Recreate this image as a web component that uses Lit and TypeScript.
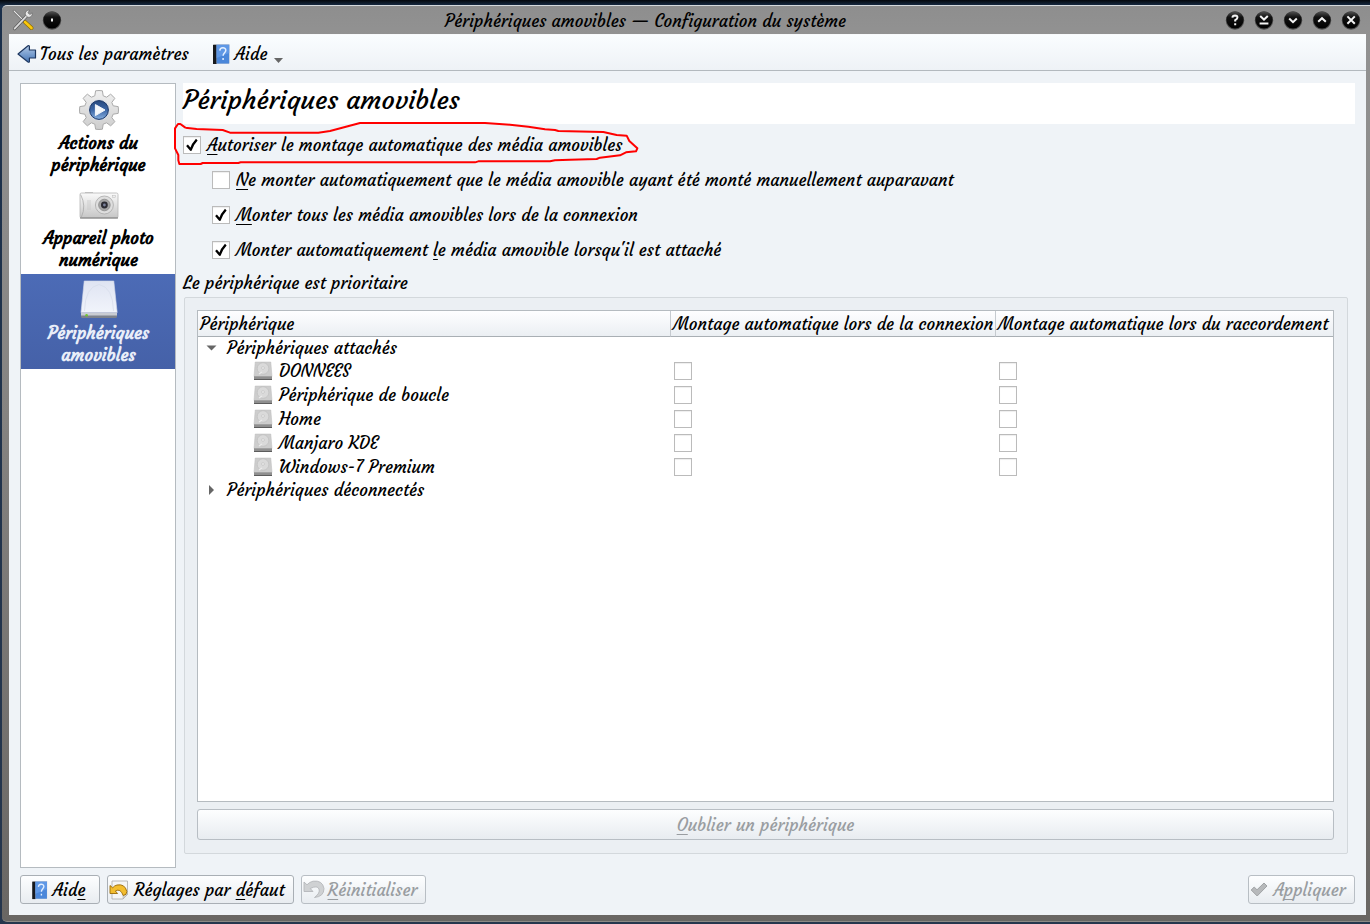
import { LitElement, html, css, svg, nothing, TemplateResult } from "lit";
import { customElement, state } from "lit/decorators.js";
import { classMap } from "lit/directives/class-map.js";

const toolsIcon = html`<svg width="22" height="22" viewBox="0 0 22 22" aria-hidden="true">
  <path d="M2 2l9 9" stroke="#555" stroke-width="2.4" stroke-linecap="round" />
  <path d="M2 2l9 9" stroke="#e6e6e6" stroke-width="1.2" stroke-linecap="round" />
  <path d="M13 13l6.500 6" stroke="#8a6a00" stroke-width="3.800" stroke-linecap="round" />
  <path d="M13 13l6.500 6" stroke="#fbc80c" stroke-width="2.600" stroke-linecap="round" />
  <path d="M2.600 19.600L15 6.600" stroke="#555" stroke-width="3" stroke-linecap="round" />
  <path d="M2.600 19.600L15 6.600" stroke="#ddd" stroke-width="1.800" stroke-linecap="round" />
  <path d="M17.600 1.200c-2.600-.4-5 1.800-4.200 4.800l2.400 2.200c2.800.6 4.800-1.600 4.400-4.400l-2.400 1.800-1.800-1.800z" fill="#e9e9e9" stroke="#666" stroke-width=".7" />
</svg>`;

const backIcon = html`<svg width="20" height="20" viewBox="0 0 20 20" aria-hidden="true">
  <defs><linearGradient id="g" x1="0" y1="0" x2="0" y2="1"><stop offset="0" stop-color="#b3c8e4" /><stop offset=".5" stop-color="#7ba0d0" /><stop offset="1" stop-color="#4675b4" /></linearGradient></defs>
  <path d="M1 10L11 1.800Q12.400 1.200 12.400 2.600V6H18.500V14H12.400V17.600Q12.200 18.600 11 18Z" fill="url(#g)" stroke="#1d3760" stroke-width="1.200" stroke-linejoin="round" />
</svg>`;

const bookIcon = (w: number, h: number) => html`<svg width=${w} height=${h} viewBox="0 0 18 22" aria-hidden="true">
  <path d="M2.500 1L1 2.200V21h15.600l.9-1V1z" fill="#d5d5d5" />
  <path d="M1 1.800h3.600V21H1z" fill="#17191d" />
  <path d="M4.600 1.800h12.600V20.600H4.600z" fill="#4a87da" />
  <path d="M4.600 1.800h12.600V10L4.600 15z" fill="#5f98e6" />
  <path d="M7.800 7.600c.2-3.800 6-3.800 6-.4 0 2.400-2.700 2.600-2.700 5.600M11.100 15v2" stroke="#e3efff" stroke-width="1.500" fill="none" />
</svg>`;

const gearIcon = html`<svg width="40" height="40" viewBox="0 0 40 40" aria-hidden="true">
  <defs>
    <linearGradient id="m" x1="0" y1="0" x2="0" y2="1"><stop offset="0" stop-color="#f0f0f0" /><stop offset="1" stop-color="#cdcdcd" /></linearGradient>
    <linearGradient id="b" x1="0" y1="0" x2="0" y2="1"><stop offset="0" stop-color="#27497f" /><stop offset=".5" stop-color="#3c66a6" /><stop offset="1" stop-color="#88b0e0" /></linearGradient>
  </defs>
  <path
    d="M16.600 .8Q20 .2 23.400 .8L24.200 5.800L27.600 7.200L31.600 4.200Q34 6 35.800 8.400L32.800 12.400L34.200 15.800L39.200 16.600Q39.800 20 39.200 23.400L34.200 24.200L32.800 27.600L35.800 31.600Q34 34 31.600 35.800L27.600 32.800L24.200 34.200L23.400 39.200Q20 39.800 16.600 39.200L15.800 34.200L12.400 32.800L8.400 35.800Q6 34 4.200 31.600L7.200 27.600L5.800 24.200L.8 23.400Q.2 20 .8 16.600L5.800 15.800L7.200 12.400L4.200 8.400Q6 6 8.400 4.200L12.400 7.200L15.800 5.800Z"
    fill="url(#m)" stroke="#aaa" stroke-width="1" stroke-linejoin="round" />
  <circle cx="20" cy="20" r="10.600" fill="#d7dde8" />
  <circle cx="20" cy="20" r="9.400" fill="url(#b)" stroke="#1d3766" stroke-width="1" />
  <path d="M16.400 14.600L26 20l-9.600 5.600z" fill="#f4f7fb" stroke="#f4f7fb" stroke-linejoin="round" />
</svg>`;

const cameraIcon = html`<svg width="40" height="40" viewBox="0 0 40 40" aria-hidden="true">
  <defs><linearGradient id="c" x1="0" y1="0" x2="0" y2="1"><stop offset="0" stop-color="#fafafa" /><stop offset="1" stop-color="#c6c6c6" /></linearGradient></defs>
  <path d="M6 7h8v2H6z" fill="#c5c5c5" />
  <rect x="1" y="8" width="38" height="25" rx="1.500" fill="url(#c)" stroke="#b5b5b5" stroke-width=".8" />
  <path d="M1.600 9.500Q7.500 21 2.400 32" fill="none" stroke="#aaa" stroke-width=".8" />
  <path d="M1 33h38" stroke="#7b7b7b" stroke-width="1.200" />
  <path d="M9 15v10M11 15v10" stroke="#c8c8c8" stroke-width=".8" />
  <circle cx="25.400" cy="20" r="9" fill="#dedede" stroke="#a9a9a9" stroke-width=".8" />
  <circle cx="25.400" cy="20" r="5.800" fill="#a4a4a4" stroke="#8a8a8a" stroke-width=".8" />
  <circle cx="25.400" cy="20" r="3.400" fill="#2b2b33" />
  <circle cx="25.400" cy="20" r="1.400" fill="#79809a" />
  <rect x="33.500" y="10.500" width="3" height="2" fill="#eee" stroke="#bbb" stroke-width=".5" />
</svg>`;

const driveIcon = html`<svg width="40" height="40" viewBox="0 0 40 40" aria-hidden="true">
  <defs><linearGradient id="d" x1="0" y1="0" x2="0" y2="1"><stop offset="0" stop-color="#dfe4f2" /><stop offset="1" stop-color="#f1f4fb" /></linearGradient></defs>
  <path d="M2 33h36v3.400Q38 38 36.400 38H3.600Q2 38 2 36.400z" fill="#7d828c" />
  <path d="M5.200 1H34.800L38.200 32.600H2z" fill="url(#d)" stroke="#d3d9e8" stroke-width=".6" />
  <path d="M2 32.600H38V35.400H2z" fill="#c9ccd3" />
  <path d="M5.500 31Q6 7 20 4.500Q34 7 34.500 31" fill="none" stroke="#d5dbe9" stroke-width=".7" />
  <circle cx="7.600" cy="35.200" r="1.300" fill="#6fc52e" />
</svg>`;

const diskIcon = html`<svg width="20" height="20" viewBox="0 0 20 20" aria-hidden="true">
  <path d="M2.200 1H17.800L19 15.500H1z" fill="#cdcdcd" stroke="#bdbdbd" stroke-width=".5" />
  <circle cx="10" cy="7.500" r="5.800" fill="#dadada" stroke="#bcbcbc" stroke-width=".6" />
  <circle cx="10" cy="7" r="1.400" fill="#ececec" stroke="#b5b5b5" stroke-width=".5" />
  <path d="M6 13l3-2" stroke="#ececec" stroke-width="1.200" />
  <path d="M1 15.300H19V18H1z" fill="#8f8f8f" />
  <path d="M1 18H19V19H1z" fill="#5c5c5c" />
</svg>`;

const undoPageIcon = html`<svg width="20" height="20" viewBox="0 0 20 20" aria-hidden="true">
  <path d="M3 1H18.500V14.500L14 19H3z" fill="#f5f5f5" stroke="#aaa" stroke-width=".8" />
  <path d="M18.500 14.500H14V19z" fill="#d2d2d2" stroke="#aaa" stroke-width=".5" />
  <path d="M1 5.500V13.500H8.600L6.300 11Q11.500 8 14.200 15.500Q18 15 17.800 11.500Q16 3.500 8 5Q5.500 5.500 3.700 7.800z" fill="#f3bd2e" stroke="#9b6b08" stroke-width=".9" stroke-linejoin="round" />
</svg>`;

const undoIcon = html`<svg width="22" height="22" viewBox="0 0 22 22" aria-hidden="true">
  <path d="M1 3V12.500H10L7.200 9.500Q14.500 6 16 10Q17.500 14 11.500 18.500Q21 17.500 21 9.500Q19.500 1 10 2.200Q6.500 3 4 5.800z" fill="#cfd1d3" stroke="#b4b7ba" stroke-width=".9" stroke-linejoin="round" />
</svg>`;

const applyIcon = html`<svg width="18" height="18" viewBox="0 0 18 18" aria-hidden="true">
  <path d="M1.200 9L4.200 6L7 8.800L14 2L17 5L7.200 15z" fill="#b7b9bb" stroke="#a0a3a5" stroke-width="1" stroke-linejoin="round" />
</svg>`;

const orb = (glyph: TemplateResult) => html`<svg width="20" height="20" viewBox="0 0 20 20" aria-hidden="true">
  <defs><linearGradient id="o" x1="0" y1="0" x2="0" y2="1"><stop offset="0" stop-color="#555" /><stop offset=".35" stop-color="#111" /><stop offset="1" stop-color="#000" /></linearGradient></defs>
  <circle cx="10" cy="10.500" r="9.200" fill="#4c4c4c" />
  <circle cx="10" cy="9.800" r="8.600" fill="url(#o)" />
  <g fill="none" stroke="#f4f4f4" stroke-width="2">${glyph}</g>
</svg>`;

const windowButtons = [
  { label: "Aide contextuelle", glyph: svg`<path d="M7.400 7.600Q7.600 5.400 10 5.400Q12.600 5.600 12.400 7.600Q12.200 9 10.200 10.200V11.600M10.200 13.200v2" />` },
  { label: "Garder dessous", glyph: svg`<path d="M6.200 6L10 9.600L13.800 6M5.600 13.400H14.400" />` },
  { label: "Réduire", glyph: svg`<path d="M6.200 8.600L10 12.200L13.800 8.600" />` },
  { label: "Agrandir", glyph: svg`<path d="M6.200 11.800L10 8.200L13.800 11.800" />` },
  { label: "Fermer", glyph: svg`<path d="M6.400 6.400L13.800 13.800M13.800 6.400L6.400 13.800" />` },
];

const modules = [
  { lines: ["Actions du", "périphérique"], icon: gearIcon },
  { lines: ["Appareil photo", "numérique"], icon: cameraIcon },
  { lines: ["Périphériques", "amovibles"], icon: driveIcon },
];

const options = [
  { before: "", key: "A", after: "utoriser le montage automatique des média amovibles", on: true },
  { before: "", key: "N", after: "e monter automatiquement que le média amovible ayant été monté manuellement auparavant", on: false },
  { before: "", key: "M", after: "onter tous les média amovibles lors de la connexion", on: true },
  { before: "Monter automatiquement ", key: "l", after: "e média amovible lorsqu'il est attaché", on: true },
];

const devices = ["DONNEES", "Périphérique de boucle", "Home", "Manjaro KDE", "Windows-7 Premium"];

@customElement("app-root")
export class AppRoot extends LitElement {
  @state() private selected = 2;

  static styles = css`
    :host {
      display: block;
      font: 17px/22px Courgette, Lato, sans-serif;
      color: #000;
    }
    * { box-sizing: border-box; }
    svg { display: block; flex: none; }
    button { font: inherit; color: inherit; margin: 0; padding: 0; border: 0; background: none; }
    u { text-decoration-thickness: 1px; text-underline-offset: 3px; text-decoration-skip-ink: none; }
    .desktop {
      min-height: 100vh;
      display: flex;
      padding: 5px 0 2px 2px;
      background: linear-gradient(#05080d, #1a2f4a 6px, #26364d);
    }
    .window {
      flex: 1;
      min-width: 0;
      display: flex;
      flex-direction: column;
      padding: 0 4px 6px 7px;
      border-top: 1px solid #d5d9dc;
      border-bottom: 1px solid #8d8985;
      border-radius: 5px 0 0 5px;
      background: linear-gradient(#8e8e8e, #929292 30px, #858381 45%, #696663);
    }
    .titlebar { display: flex; align-items: center; height: 28px; padding: 0 5px 0 3px; }
    .title { flex: 1; text-align: center; padding: 2px 0 0 4px; }
    .orbs { display: flex; gap: 9px; }
    .left { gap: 8px; align-items: center; }
    .client {
      flex: 1;
      display: flex;
      flex-direction: column;
      background: #eff3f7;
      border-top: 1px solid #f8fafc;
    }
    .toolbar {
      display: flex;
      align-items: center;
      height: 36px;
      padding: 2px 8px 0;
      gap: 23px;
      background: linear-gradient(#fafdff, #eef2f6);
      border-bottom: 1px solid #b3b9be;
    }
    .tool { display: flex; align-items: center; gap: 3px; }
    .help { gap: 5px; }
    .caret { margin: 14px 0 0 2px; }
    .content { flex: 1; display: flex; gap: 7px; padding: 12px 11px 7px; }
    .sidebar { width: 156px; flex: none; background: #fff; border: 1px solid #b5bbc0; }
    .module {
      display: flex;
      flex-direction: column;
      align-items: center;
      gap: 2px;
      width: 100%;
      padding: 6px 0 3px 1px;
      font-weight: 700;
    }
    .module.selected { color: #e9eef9; background: linear-gradient(#4c6bb6, #4561a8); }
    .module span { display: block; }
    .panel { flex: 1; min-width: 0; display: flex; flex-direction: column; }
    h1 { margin: 0 0 10px; height: 41px; font-size: 26px; line-height: 34px; font-weight: 400; background: #fff; }
    .options { display: flex; flex-direction: column; align-items: flex-start; gap: 13px; }
    .option { display: flex; align-items: center; gap: 6px; position: relative; }
    .child { margin-left: 29px; }
    .check { display: inline-grid; width: 18px; height: 18px; flex: none; }
    .check > * { grid-area: 1 / 1; }
    .check input {
      appearance: none;
      margin: 0;
      width: 18px;
      height: 18px;
      border: 1px solid #bbb;
      background: #fff;
      box-shadow: inset 0 1px 1px #eee;
    }
    .check svg { visibility: hidden; pointer-events: none; z-index: 1; }
    .check input:checked + svg { visibility: visible; }
    .scribble { position: absolute; left: -13px; top: -14px; pointer-events: none; }
    h2 { margin: 11px 0 3px; font-size: 17px; line-height: 22px; font-weight: 400; }
    .group {
      flex: 1;
      display: flex;
      flex-direction: column;
      gap: 7px;
      margin: 0 7px 14px 1px;
      padding: 12px 13px 13px 12px;
      border: 1px solid #d3d8dc;
      border-radius: 2px;
      background: #ebeff3;
    }
    .list { flex: 1; background: #fff; border: 1px solid #b5bbc0; }
    table { width: 100%; border-collapse: separate; border-spacing: 0; table-layout: fixed; }
    th {
      height: 26px;
      padding: 0 0 0 2px;
      font-weight: 400;
      text-align: left;
      white-space: nowrap;
      background: linear-gradient(#fefeff, #ebeff3);
      border-bottom: 1px solid #a9afb4;
    }
    th + th { border-left: 1px solid #c5cacf; }
    .mount { width: 325px; }
    .plug { width: 338px; }
    td { height: 24px; padding: 0 0 0 4px; line-height: 20px; }
    td.branch { height: 22px; padding: 0; }
    .node { display: flex; align-items: center; gap: 9px; padding-left: 7px; }
    .device { display: flex; align-items: center; gap: 6px; padding-left: 51px; }
    td .check { display: grid; }
    .btn {
      display: flex;
      align-items: center;
      justify-content: center;
      gap: 5px;
      height: 29px;
      padding: 0 6px;
      border: 1px solid #a9afb5;
      border-radius: 3px;
      background: linear-gradient(#fdfeff, #e8ecf0);
      white-space: nowrap;
    }
    .btn:disabled { color: #999da1; border-color: #b8bec4; }
    .forget { height: 31px; }
    .footer { display: flex; gap: 7px; padding: 0 11px 11px; }
    .assist { min-width: 80px; padding: 0 10px 0 6px; }
    .defaults, .reset, .apply { padding: 0 8px 0 1px; }
    .defaults { min-width: 186px; }
    .reset { min-width: 124px; gap: 3px; }
    .apply { min-width: 107px; margin-left: auto; }
  `;

  private check(id: string, on: boolean, label?: string) {
    return html`<span class="check">
      <input type="checkbox" id=${id} .checked=${on} aria-label=${label ?? nothing} />
      <svg width="18" height="18" viewBox="0 0 18 18" aria-hidden="true">
        <path d="M4 9.200L7.800 13.800Q9.500 8 13.800 3.600" fill="none" stroke="#000" stroke-width="2.300" stroke-linejoin="round" />
      </svg>
    </span>`;
  }

  render() {
    return html`<div class="desktop">
      <div class="window">
        <header class="titlebar">
          <div class="orbs left">
            ${toolsIcon}
            <button aria-label="Tous les bureaux">${orb(svg`<path d="M10 8.500v3" />`)}</button>
          </div>
          <div class="title">Périphériques amovibles — Configuration du système</div>
          <div class="orbs">
            ${windowButtons.map((b) => html`<button aria-label=${b.label}>${orb(b.glyph)}</button>`)}
          </div>
        </header>
        <div class="client">
          <nav class="toolbar">
            <button class="tool">${backIcon}Tous les paramètres</button>
            <button class="tool help">
              ${bookIcon(18, 22)}Aide
              <svg class="caret" width="9" height="5" viewBox="0 0 9 5" aria-hidden="true"><path d="M0 0h9L4.500 5z" fill="#666" /></svg>
            </button>
          </nav>
          <div class="content">
            <nav class="sidebar">
              ${modules.map(
                (m, i) => html`<button
                  class=${classMap({ module: true, selected: i === this.selected })}
                  @click=${() => (this.selected = i)}
                >
                  ${m.icon}
                  <span>${m.lines.map((l) => html`<span>${l}</span>`)}</span>
                </button>`
              )}
            </nav>
            <main class="panel">
              <h1>Périphériques amovibles</h1>
              <div class="options">
                ${options.map(
                  (o, i) => html`<div class=${classMap({ option: true, child: i > 0 })}>
                    ${this.check(`option-${i}`, o.on)}
                    <label for="option-${i}">${o.before}<u>${o.key}</u>${o.after}</label>
                    ${i === 0
                      ? html`<svg class="scribble" width="480" height="50" viewBox="0 15 1440 150" aria-hidden="true">
                          <path
                            d="M46 38L31 27L24 27L15 40V100L25 120V136L28 147H92L98 144H205L212 142H915L925 139H1140L1155 136L1200 134L1280 132L1290 128L1350 121L1368 112L1398 109L1402 100L1378 78L1370 62L1340 60L1300 51L1165 48L1155 45L1125 43L1075 35L1020 29L945 24H570L480 48L445 53H180L158 45L80 42L46 38"
                            fill="none" stroke="#f00" stroke-width="6" stroke-linejoin="round" />
                        </svg>`
                      : nothing}
                  </div>`
                )}
              </div>
              <h2>Le périphérique est prioritaire</h2>
              <section class="group">
                <div class="list">
                  <table>
                    <thead>
                      <tr>
                        <th>Périphérique</th>
                        <th class="mount">Montage automatique lors de la connexion</th>
                        <th class="plug">Montage automatique lors du raccordement</th>
                      </tr>
                    </thead>
                    <tbody>
                      <tr>
                        <td class="branch" colspan="3">
                          <div class="node">
                            <svg width="13" height="12" viewBox="0 0 13 12" aria-hidden="true"><path d="M1.500 3.500h10L6.500 8.500z" fill="#666" /></svg>Périphériques attachés
                          </div>
                        </td>
                      </tr>
                      ${devices.map(
                        (d, i) => html`<tr>
                          <td><div class="device">${diskIcon}${d}</div></td>
                          <td>${this.check(`mount-${i}`, false, `${d} : montage lors de la connexion`)}</td>
                          <td>${this.check(`plug-${i}`, false, `${d} : montage lors du raccordement`)}</td>
                        </tr>`
                      )}
                      <tr>
                        <td class="branch" colspan="3">
                          <div class="node">
                            <svg width="13" height="12" viewBox="0 0 13 12" aria-hidden="true"><path d="M4 1v10L9 6z" fill="#666" /></svg>Périphériques déconnectés
                          </div>
                        </td>
                      </tr>
                    </tbody>
                  </table>
                </div>
                <button class="btn forget" disabled><span><u>O</u>ublier un périphérique</span></button>
              </section>
            </main>
          </div>
          <footer class="footer">
            <button class="btn assist">${bookIcon(17, 20)}<span>Aid<u>e</u></span></button>
            <button class="btn defaults">${undoPageIcon}<span>Réglages par <u>d</u>éfaut</span></button>
            <button class="btn reset" disabled>${undoIcon}<span><u>R</u>éinitialiser</span></button>
            <button class="btn apply" disabled>${applyIcon}<span>A<u>p</u>pliquer</span></button>
          </footer>
        </div>
      </div>
    </div>`;
  }
}
